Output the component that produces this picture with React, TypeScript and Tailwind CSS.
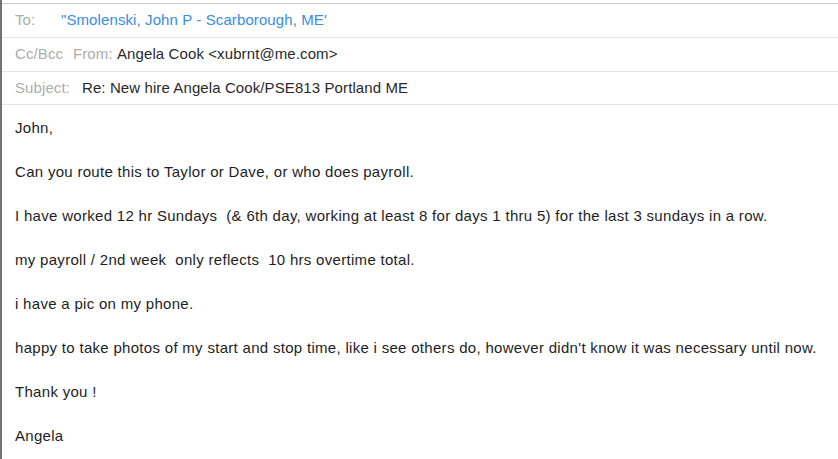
export default function App() {
  const body = [
    "John,",
    "Can you route this to Taylor or Dave, or who does payroll.",
    "I have worked 12 hr Sundays  (& 6th day, working at least 8 for days 1 thru 5) for the last 3 sundays in a row.",
    "my payroll / 2nd week  only reflects  10 hrs overtime total.",
    "i have a pic on my phone.",
    "happy to take photos of my start and stop time, like i see others do, however didn't know it was necessary until now.",
    "Thank you !",
    "Angela",
  ];

  return (
    <div
      className="w-[838px] h-[459px] overflow-hidden bg-white border-l-2 border-[#6f7275] pt-[3px]"
      style={{ fontFamily: '"Liberation Sans", Arial, sans-serif' }}
    >
      <div className="border-t border-[#c3cbcf]">
        <div className="h-[34px] flex items-center border-b border-[#e6e6e6] pl-[13px] text-[15px] tracking-[0.1px]">
          <span className="text-[#adadad] w-[46px] shrink-0">To:</span>
          <span className="text-[#3a8ddd]">"Smolenski, John P - Scarborough, ME'</span>
        </div>
        <div className="h-[34px] flex items-center border-b border-[#e6e6e6] pl-[13px] text-[15px] tracking-[0.1px]">
          <span className="text-[#adadad] w-[58px] shrink-0">Cc/Bcc</span>
          <span className="text-[#adadad] w-[44px] shrink-0">From:</span>
          <span className="text-[#2a2a2a]">Angela Cook &lt;xubrnt@me.com&gt;</span>
        </div>
        <div className="h-[33px] flex items-center border-b border-[#e6e6e6] pl-[13px] text-[15px] tracking-[0.1px]">
          <span className="text-[#adadad] w-[67px] shrink-0">Subject:</span>
          <span className="text-[#2a2a2a]">Re: New hire Angela Cook/PSE813 Portland ME</span>
        </div>
      </div>
      <div className="pl-[13px] pt-[12px] text-[15px] tracking-[0.3px] leading-[22px] text-[#1e1e1e] whitespace-pre">
        {body.map((line, i) => (
          <p key={i} className="mb-[22px]">
            {line}
          </p>
        ))}
      </div>
    </div>
  );
}
